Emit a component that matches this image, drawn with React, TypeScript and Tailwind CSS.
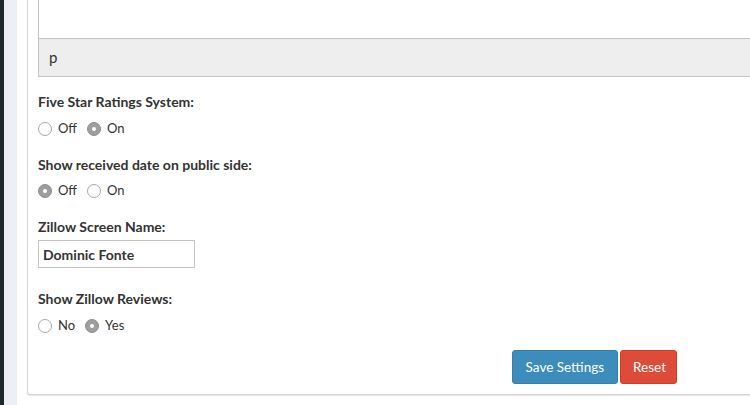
import React from "react";

const Radio = ({ checked, label }: { checked?: boolean; label: string }) => (
	<label className="flex items-center mr-[10px]">
		{checked ? (
			<span className="flex items-center justify-center w-[14px] h-[14px] rounded-full bg-[#9e9e9e] border border-[#8f8f8f]">
				<span className="w-[4px] h-[4px] rounded-full bg-white" />
			</span>
		) : (
			<span className="w-[14px] h-[14px] rounded-full bg-white border border-[#a9a9a9]" />
		)}
		<span className="ml-[6px] text-[13px] text-[#333]">{label}</span>
	</label>
);

const Field = ({ title, className, children }: { title: string; className: string; children: React.ReactNode }) => (
	<div className={className}>
		<div className="h-[20px] leading-[20px] text-[14px] font-bold text-[#333]">{title}</div>
		{children}
	</div>
);

export default function App() {
	return (
		<div className="flex w-[750px] h-[405px] overflow-hidden bg-white font-['Lato',sans-serif]">
			<div className="w-[4px] shrink-0 bg-[#1e282c]" />
			<div className="w-[13px] shrink-0 bg-[#ecf0f5]" />
			<div className="shrink-0 pl-[10px]">
				<div className="w-[740px] h-[395px] px-[10px] pb-[10px] bg-white border border-t-0 border-[#d2d6de] rounded-b-[3px] shadow-[0_1px_1px_rgba(0,0,0,0.1)] flex flex-col">
					{/* editor bottom */}
					<div className="h-[39px] border-x border-b border-[#c4c4c4]" />
					<div className="h-[38px] flex items-center pl-[10px] bg-[#eeeeee] border-x border-b border-[#c4c4c4] text-[15px] text-[#333]">
						p
					</div>

					<Field title="Five Star Ratings System:" className="mt-[15px]">
						<div className="flex items-center h-[20px] mt-[7px]">
							<Radio label="Off" />
							<Radio checked label="On" />
						</div>
					</Field>

					<Field title="Show received date on public side:" className="mt-[16px]">
						<div className="flex items-center h-[20px] mt-[6px]">
							<Radio checked label="Off" />
							<Radio label="On" />
						</div>
					</Field>

					<Field title="Zillow Screen Name:" className="mt-[16px]">
						<input
							readOnly
							value="Dominic Fonte"
							className="mt-[3px] w-[157px] h-[28px] px-[4px] border border-[#c4c4c4] text-[14px] font-bold text-[#333] outline-none"
						/>
					</Field>

					<Field title="Show Zillow Reviews:" className="mt-[21px]">
						<div className="flex items-center h-[20px] mt-[7px]">
							<Radio label="No" />
							<Radio checked label="Yes" />
						</div>
					</Field>

					<div className="flex justify-end gap-[2px] mt-auto pr-[79px]">
						<button className="h-[34px] px-[13px] rounded-[3px] bg-[#3c8dbc] border border-[#367fa9] text-white text-[13.5px]">
							Save Settings
						</button>
						<button className="h-[34px] pl-[12px] pr-[10px] rounded-[3px] bg-[#dd4b39] border border-[#d73925] text-white text-[13.5px]">
							Reset
						</button>
					</div>
				</div>
			</div>
		</div>
	);
}
